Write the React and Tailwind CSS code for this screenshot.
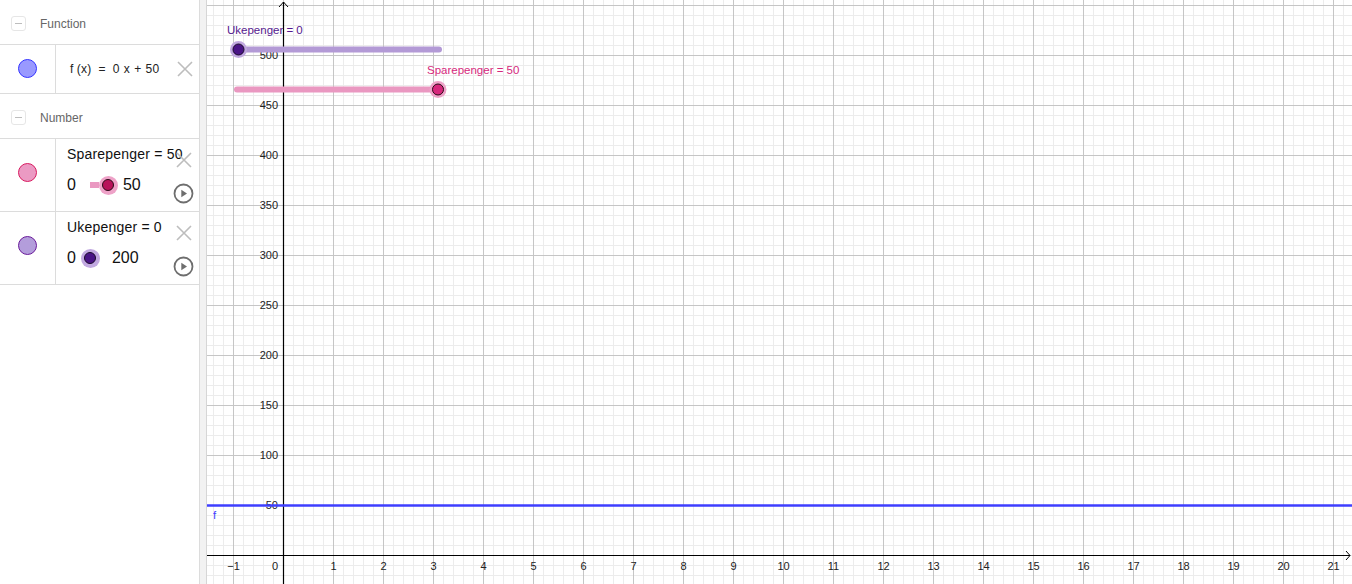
import React from 'react';

const X0 = 283; // screen x of x = 0
const Y0 = 555; // screen y of y = 0
const LEFT = 207;
const RIGHT = 1352;

function Grid() {
  const minorX = [];
  for (let x = X0 - 70; x <= RIGHT; x += 10) minorX.push(x);
  const minorY = [];
  for (let y = Y0 + 20; y >= 0; y -= 10) minorY.push(y);
  const majorX = [];
  for (let k = -1; k <= 21; k++) majorX.push(k);
  const majorY = [];
  for (let k = 1; k <= 11; k++) majorY.push(k * 50);

  return (
    <svg className="block h-full w-full" viewBox={`${LEFT} 0 ${RIGHT - LEFT} 584`} preserveAspectRatio="none">
      {minorX.map((x) => (
        <line key={'mx' + x} x1={x + 0.5} x2={x + 0.5} y1={0} y2={584} stroke="#ececec" strokeWidth="1" />
      ))}
      {minorY.map((y) => (
        <line key={'my' + y} x1={LEFT} x2={RIGHT} y1={y + 0.5} y2={y + 0.5} stroke="#ececec" strokeWidth="1" />
      ))}
      {majorX.map((k) => (
        <line key={'Mx' + k} x1={X0 + k * 50 + 0.5} x2={X0 + k * 50 + 0.5} y1={0} y2={584} stroke="#c6c6c6" strokeWidth="1" />
      ))}
      {majorY.map((v) => (
        <line key={'My' + v} x1={LEFT} x2={RIGHT} y1={Y0 - v + 0.5} y2={Y0 - v + 0.5} stroke="#c6c6c6" strokeWidth="1" />
      ))}

      {/* axes */}
      <line x1={LEFT} x2={RIGHT - 2} y1={Y0 + 0.5} y2={Y0 + 0.5} stroke="#000" strokeWidth="1" />
      <path d={`M${RIGHT - 6} ${Y0 - 4} L${RIGHT - 2} ${Y0 + 0.5} L${RIGHT - 6} ${Y0 + 5}`} fill="none" stroke="#000" strokeWidth="1" />
      <line x1={X0 + 0.5} x2={X0 + 0.5} y1={2} y2={584} stroke="#000" strokeWidth="1.2" />
      <path d={`M${X0 - 4} 7 L${X0 + 0.5} 2 L${X0 + 5} 7`} fill="none" stroke="#000" strokeWidth="1" />

      {/* axis numbers */}
      <g fontFamily="'Liberation Sans', Arial, sans-serif" fontSize="11" fill="#222">
        {majorX
          .filter((k) => k !== 0)
          .map((k) => (
            <text key={'lx' + k} x={X0 + k * 50 + 0.5} y={570} textAnchor="middle">
              {k < 0 ? '\u2212' + -k : k}
            </text>
          ))}
        <text x={275} y={570} textAnchor="middle">0</text>
        {majorY.slice(0, 10).map((v) => (
          <text key={'ly' + v} x={278} y={Y0 - v + 4} textAnchor="end">
            {v}
          </text>
        ))}
      </g>

      {/* function f */}
      <line x1={LEFT} x2={RIGHT} y1={505.5} y2={505.5} stroke="#3f3fff" strokeWidth="2.6" />
      <text x={213} y={519} fontFamily="'Liberation Sans', Arial, sans-serif" fontSize="11.5" fill="#3f3fff">f</text>

      {/* Ukepenger slider */}
      <line x1={238} x2={439} y1={49.5} y2={49.5} stroke="#b39ad6" strokeWidth="6" strokeLinecap="round" />
      <circle cx={238.5} cy={49.5} r={8.5} fill="#c1a8e0" />
      <circle cx={238.5} cy={49.5} r={5.5} fill="#4a1486" stroke="#1a0a2a" strokeWidth="1" />
      <text x={227} y={34} fontFamily="'Liberation Sans', Arial, sans-serif" fontSize="11.5" fill="#55188e">
        Ukepenger = 0
      </text>

      {/* Sparepenger slider */}
      <line x1={237} x2={437} y1={89.5} y2={89.5} stroke="#ea98c1" strokeWidth="6" strokeLinecap="round" />
      <circle cx={438} cy={89.5} r={8.5} fill="#eea2c8" />
      <circle cx={438} cy={89.5} r={5.5} fill="#d6287c" stroke="#2a0a16" strokeWidth="1" />
      <text x={427} y={74} fontFamily="'Liberation Sans', Arial, sans-serif" fontSize="11.5" fill="#d6287c">
        Sparepenger = 50
      </text>
    </svg>
  );
}

function Minus() {
  return (
    <div className="flex h-[15px] w-[15px] items-center justify-center rounded-[3px] border border-[#e6e6e6]">
      <div className="h-px w-[7px] bg-[#bdbdbd]" />
    </div>
  );
}

function Cross() {
  return (
    <svg width="18" height="18" viewBox="0 0 18 18">
      <path d="M2 2 L16 16 M16 2 L2 16" stroke="#bdbdbd" strokeWidth="1.6" fill="none" />
    </svg>
  );
}

function Play() {
  return (
    <svg width="21" height="21" viewBox="0 0 21 21">
      <circle cx="10.5" cy="10.5" r="9" fill="none" stroke="#6e6e6e" strokeWidth="1.8" />
      <path d="M8.3 6.8 L14 10.5 L8.3 14.2 Z" fill="#6e6e6e" />
    </svg>
  );
}

function Dot({ fill, border }) {
  return <div className={`h-[19px] w-[19px] rounded-full border ${fill} ${border}`} />;
}

function Header({ label }) {
  return (
    <div className="flex h-[45px] items-center border-b border-[#dcdcdc] pl-[11px] pt-[3px]">
      <Minus />
      <span className="ml-[14px] text-[12px] text-[#666]">{label}</span>
    </div>
  );
}

export default function App() {
  return (
    <div className="flex h-[584px] w-[1352px] overflow-hidden bg-white" style={{ fontFamily: "'Liberation Sans', Arial, sans-serif" }}>
      <div className="w-[200px] shrink-0 border-r border-[#dcdcdc] bg-white">
        <Header label="Function" />
        <div className="flex h-[49px] border-b border-[#dcdcdc]">
          <div className="flex w-[56px] items-center justify-center border-r border-[#dcdcdc] pb-[2px]">
            <Dot fill="bg-[#9999ff]" border="border-[#3333ff]" />
          </div>
          <div className="flex flex-1 items-center justify-between pl-[14px] pr-[5px]">
            <span className="text-[12px] text-[#222] tracking-[0.3px]">
              f<span className="ml-[3px]">(x)</span>
              <span className="mx-[7px]">=</span>0<span className="ml-[4px]">x</span>
              <span className="mx-[4px]">+</span>50
            </span>
            <Cross />
          </div>
        </div>
        <Header label="Number" />
        <div className="flex h-[73px] border-b border-[#dcdcdc]">
          <div className="flex w-[56px] items-center justify-center border-r border-[#dcdcdc] pb-[5px]">
            <Dot fill="bg-[#eb9ac3]" border="border-[#d81b60]" />
          </div>
          <div className="relative flex-1 pl-[11px] pt-[5px]">
            <div className="text-[14px] tracking-[0.2px] text-[#111]">Sparepenger = 50</div>
            <div className="mt-[8px] flex items-center text-[16px] text-[#111]">
              <span>0</span>
              <div className="ml-[14px] flex items-center">
                <div className="h-[6px] w-[9px] bg-[#ea98c1]" />
                <div className="flex h-[19px] w-[19px] items-center justify-center rounded-full bg-[#eea2c8]">
                  <div className="h-[12px] w-[12px] rounded-full border border-[#2a0a16] bg-[#b8125a]" />
                </div>
              </div>
              <span className="ml-[5px]">50</span>
            </div>
            <div className="absolute right-[6px] top-[12px]">
              <Cross />
            </div>
            <div className="absolute right-[5px] top-[44px]">
              <Play />
            </div>
          </div>
        </div>
        <div className="flex h-[73px] border-b border-[#dcdcdc]">
          <div className="flex w-[56px] items-center justify-center border-r border-[#dcdcdc] pb-[5px]">
            <Dot fill="bg-[#b39ddb]" border="border-[#6a1b9a]" />
          </div>
          <div className="relative flex-1 pl-[11px] pt-[5px]">
            <div className="text-[14px] tracking-[0.2px] text-[#111]">Ukepenger = 0</div>
            <div className="mt-[8px] flex items-center text-[16px] text-[#111]">
              <span>0</span>
              <div className="ml-[5px] flex h-[19px] w-[19px] items-center justify-center rounded-full bg-[#c1a8e0]">
                <div className="h-[12px] w-[12px] rounded-full border border-[#1a0a2a] bg-[#4a1486]" />
              </div>
              <span className="ml-[12px]">200</span>
            </div>
            <div className="absolute right-[6px] top-[12px]">
              <Cross />
            </div>
            <div className="absolute right-[5px] top-[44px]">
              <Play />
            </div>
          </div>
        </div>
      </div>
      <div className="w-[7px] shrink-0 border-r border-[#d6d6d6] bg-[#f2f2f2]" />
      <div className="h-full flex-1">
        <Grid />
      </div>
    </div>
  );
}
